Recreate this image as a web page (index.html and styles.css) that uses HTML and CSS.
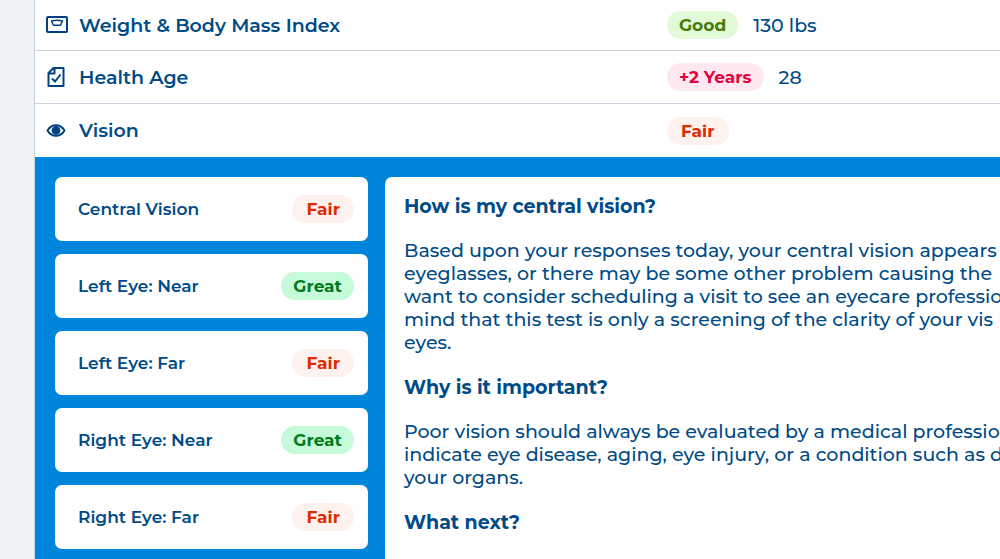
FILE: index.html
```
<!DOCTYPE html>
<html lang="en">
<head>
    <meta charset="utf-8">
    <title>Health Results</title>
    <link rel="stylesheet" href="styles.css">
</head>

<body>
    <main class="results">
        <div class="row">
            <svg class="icon" viewBox="0 0 24 24" aria-hidden="true">
                <rect x="3" y="4" width="20" height="15" rx="1" fill="none" stroke="currentColor" stroke-width="2"/>
                <path d="M7.5 8Q13 6.5 18.500 8L16.500 12.200H9.500Z" fill="none" stroke="currentColor" stroke-width="1.5" stroke-linejoin="round"/>
            </svg>
            <span class="name">Weight &amp; Body Mass Index</span>
            <span class="pill good">Good</span>
            <span class="value">130 lbs</span>
        </div>
        <div class="row">
            <svg class="icon" viewBox="0 0 24 24" aria-hidden="true">
                <path d="M9.5 3H19.5V21H4.5V8ZM10.5 3V8.5H4.5" fill="none" stroke="currentColor" stroke-width="2" stroke-linejoin="round"/>
                <path d="M8 13.5L11 16.5L16.5 9.500" fill="none" stroke="currentColor" stroke-width="2"/>
            </svg>
            <span class="name">Health Age</span>
            <span class="pill years">+2 Years</span>
            <span class="value">28</span>
        </div>
        <div class="row open">
            <svg class="icon" viewBox="0 0 24 24" aria-hidden="true">
                <path d="M3.5 11.5C7.5 4.5 16.5 4.5 20.5 11.5C16.5 18.5 7.5 18.5 3.5 11.5Z" fill="none" stroke="currentColor" stroke-width="2" stroke-linejoin="round"/>
                <circle cx="12" cy="11.5" r="4.4" fill="currentColor"/>
            </svg>
            <span class="name">Vision</span>
            <span class="pill fair">Fair</span>
        </div>

        <section class="panel">
            <div class="tests">
                <button type="button" class="card">Central Vision <span class="pill fair">Fair</span></button>
                <button type="button" class="card">Left Eye: Near <span class="pill great">Great</span></button>
                <button type="button" class="card">Left Eye: Far <span class="pill fair">Fair</span></button>
                <button type="button" class="card">Right Eye: Near <span class="pill great">Great</span></button>
                <button type="button" class="card">Right Eye: Far <span class="pill fair">Fair</span></button>
            </div>
            <article class="detail">
                <h3>How is my central vision?</h3>
                <p>Based upon your responses today, your central vision appears<br>
                eyeglasses, or there may be some other problem causing the<br>
                want to consider scheduling a visit to see an eyecare professio<br>
                mind that this test is only a screening of the clarity of your vis<br>
                eyes.</p>
                <h3>Why is it important?</h3>
                <p>Poor vision should always be evaluated by a medical professio<br>
                indicate eye disease, aging, eye injury, or a condition such as d<br>
                your organs.</p>
                <h3>What next?</h3>
            </article>
        </section>
    </main>
</body>
</html>
```

FILE: styles.css
```
* {
    box-sizing: border-box;
}

body {
    margin: 0;
    background: #eff3f6;
    color: #004b87;
    font-family: Montserrat, Inter, sans-serif;
    font-size: 19px;
    font-weight: 500;
    overflow: hidden;
}

.results {
    display: flex;
    flex-direction: column;
    min-height: 100vh;
    margin-left: 34px;
    border-left: 1px solid #c9d3df;
    background: #fff;
}

/* result rows */
.row {
    display: grid;
    grid-template-columns: 24px 599px auto 1fr;
    align-items: center;
    height: 53px;
    padding-left: 9px;
    border-bottom: 1px solid #c9d3df;
}

.row:first-child {
    height: 51px;
}

.row.open {
    border-bottom: 0;
}

.icon {
    width: 24px;
    height: 24px;
    color: #00427f;
}

.name {
    padding-left: 11px;
    font-weight: 600;
}

.value {
    padding-left: 15px;
}

.pill {
    padding: 0 12px;
    border-radius: 14px;
    font-size: 17px;
    font-weight: 700;
    line-height: 28px;
}

.good {
    background: #e3fad8;
    color: #457b00;
}

.great {
    background: #c5fbd9;
    color: #007a1c;
}

.years {
    background: #ffe9f1;
    color: #e4003f;
}

.fair {
    padding: 0 14px;
    background: #fff1ee;
    color: #dc2c00;
}

/* opened section */
.panel {
    flex: 1;
    display: flex;
    gap: 17px;
    padding: 20px 0 0 20px;
    background: #0085dc;
}

.tests {
    display: flex;
    flex-direction: column;
    gap: 13px;
    width: 313px;
    flex-shrink: 0;
    padding-bottom: 12px;
}

.card {
    display: flex;
    justify-content: space-between;
    align-items: center;
    height: 64px;
    padding: 0 14px 0 23px;
    border: 0;
    border-radius: 7px;
    background: #fff;
    color: #004b87;
    font-family: inherit;
    font-size: 17px;
    font-weight: 600;
}

.detail {
    flex: 1;
    min-width: 0;
    overflow: hidden;
    padding: 18px 0 0 19px;
    border-radius: 7px 0 0 0;
    background: #fff;
    line-height: 23px;
    white-space: nowrap;
}

.detail h3 {
    margin: 0 0 21px;
    font-size: 19px;
    font-weight: 700;
}

.detail p {
    margin: 0 0 22px;
}
```
